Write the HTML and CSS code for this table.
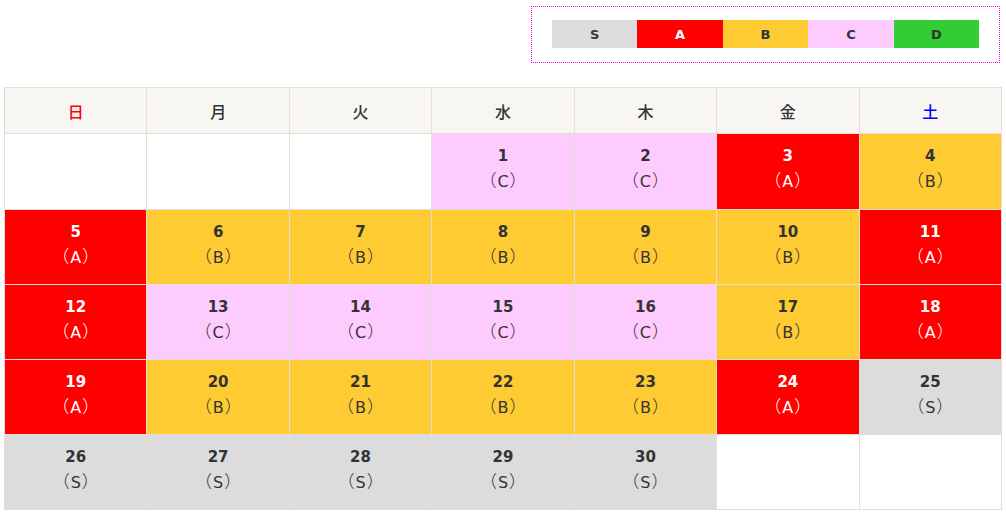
FILE: index.html
```html
<!DOCTYPE html>
<html lang="ja">
<head>
<meta charset="utf-8">
<link rel="stylesheet" href="styles.css">
</head>
<body>
<div class="page">
  <div class="legend-row">
    <div class="legend">
      <span class="lg s">S</span>
      <span class="lg a">A</span>
      <span class="lg b">B</span>
      <span class="lg c">C</span>
      <span class="lg d">D</span>
    </div>
  </div>
  <table class="cal">
    <thead>
      <tr>
        <th class="sun">日</th><th>月</th><th>火</th><th>水</th><th>木</th><th>金</th><th class="sat">土</th>
      </tr>
    </thead>
    <tbody>
      <tr class="first">
        <td></td><td></td><td></td>
        <td class="c"><div class="n">1</div><div class="r"><span class="p">（</span>C<span class="p">）</span></div></td>
        <td class="c"><div class="n">2</div><div class="r"><span class="p">（</span>C<span class="p">）</span></div></td>
        <td class="a"><div class="n">3</div><div class="r"><span class="p">（</span>A<span class="p">）</span></div></td>
        <td class="b"><div class="n">4</div><div class="r"><span class="p">（</span>B<span class="p">）</span></div></td>
      </tr>
      <tr>
        <td class="a"><div class="n">5</div><div class="r"><span class="p">（</span>A<span class="p">）</span></div></td>
        <td class="b"><div class="n">6</div><div class="r"><span class="p">（</span>B<span class="p">）</span></div></td>
        <td class="b"><div class="n">7</div><div class="r"><span class="p">（</span>B<span class="p">）</span></div></td>
        <td class="b"><div class="n">8</div><div class="r"><span class="p">（</span>B<span class="p">）</span></div></td>
        <td class="b"><div class="n">9</div><div class="r"><span class="p">（</span>B<span class="p">）</span></div></td>
        <td class="b"><div class="n">10</div><div class="r"><span class="p">（</span>B<span class="p">）</span></div></td>
        <td class="a"><div class="n">11</div><div class="r"><span class="p">（</span>A<span class="p">）</span></div></td>
      </tr>
      <tr>
        <td class="a"><div class="n">12</div><div class="r"><span class="p">（</span>A<span class="p">）</span></div></td>
        <td class="c"><div class="n">13</div><div class="r"><span class="p">（</span>C<span class="p">）</span></div></td>
        <td class="c"><div class="n">14</div><div class="r"><span class="p">（</span>C<span class="p">）</span></div></td>
        <td class="c"><div class="n">15</div><div class="r"><span class="p">（</span>C<span class="p">）</span></div></td>
        <td class="c"><div class="n">16</div><div class="r"><span class="p">（</span>C<span class="p">）</span></div></td>
        <td class="b"><div class="n">17</div><div class="r"><span class="p">（</span>B<span class="p">）</span></div></td>
        <td class="a"><div class="n">18</div><div class="r"><span class="p">（</span>A<span class="p">）</span></div></td>
      </tr>
      <tr>
        <td class="a"><div class="n">19</div><div class="r"><span class="p">（</span>A<span class="p">）</span></div></td>
        <td class="b"><div class="n">20</div><div class="r"><span class="p">（</span>B<span class="p">）</span></div></td>
        <td class="b"><div class="n">21</div><div class="r"><span class="p">（</span>B<span class="p">）</span></div></td>
        <td class="b"><div class="n">22</div><div class="r"><span class="p">（</span>B<span class="p">）</span></div></td>
        <td class="b"><div class="n">23</div><div class="r"><span class="p">（</span>B<span class="p">）</span></div></td>
        <td class="a"><div class="n">24</div><div class="r"><span class="p">（</span>A<span class="p">）</span></div></td>
        <td class="s"><div class="n">25</div><div class="r"><span class="p">（</span>S<span class="p">）</span></div></td>
      </tr>
      <tr>
        <td class="s"><div class="n">26</div><div class="r"><span class="p">（</span>S<span class="p">）</span></div></td>
        <td class="s"><div class="n">27</div><div class="r"><span class="p">（</span>S<span class="p">）</span></div></td>
        <td class="s"><div class="n">28</div><div class="r"><span class="p">（</span>S<span class="p">）</span></div></td>
        <td class="s"><div class="n">29</div><div class="r"><span class="p">（</span>S<span class="p">）</span></div></td>
        <td class="s"><div class="n">30</div><div class="r"><span class="p">（</span>S<span class="p">）</span></div></td>
        <td></td><td></td>
      </tr>
    </tbody>
  </table>
</div>
</body>
</html>
```
FILE: styles.css
```css
html, body {
  margin: 0;
  padding: 0;
  background: #fff;
}
body {
  font-family: "DejaVu Sans", "Noto Sans CJK JP", sans-serif;
  color: #333;
}
.page {
  padding: 6px 4px 0 4px;
}
.legend-row {
  display: flex;
  justify-content: flex-end;
  padding-right: 2px;
}
.legend {
  width: 427px;
  border: 1px dotted #ff00ff;
  padding: 13px 20px 14px 20px;
  display: flex;
}
.lg {
  flex: 1;
  height: 28px;
  display: flex;
  align-items: center;
  justify-content: center;
  font-weight: bold;
  font-size: 13px;
  color: #333;
}
.s { background: #dcdcdc; }
.a { background: #ff0000; color: #fff; }
.b { background: #fecb33; }
.c { background: #fecbfe; }
.d { background: #33cc33; }
.lg.a { color: #fff; }

.cal {
  margin-top: 24px;
  width: 998px;
  border-collapse: collapse;
  table-layout: fixed;
}
.cal th, .cal td {
  border: 1px solid #e6ddd4;
  text-align: center;
  padding: 0;
}
.cal th {
  background: #f8f6f2;
  height: 45px;
  font-family: "Noto Sans CJK JP", sans-serif;
  font-weight: 500;
  font-size: 16px;
  color: #333;
}
.cal th.sun { color: #ff0000; }
.cal th.sat { color: #0000ff; }
.cal td {
  height: 74px;
  vertical-align: top;
}
.cal tr.first td {
  height: 75px;
}
.n {
  margin-top: 12px;
  font-weight: bold;
  font-size: 15px;
  line-height: 20px;
}
.r {
  margin-top: 3px;
  font-size: 16px;
  line-height: 22px;
  font-family: "DejaVu Sans", sans-serif;
  font-weight: normal;
}
.p {
  font-family: "Noto Sans CJK JP", sans-serif;
  font-weight: 300;
  font-size: 17px;
}
.p:first-child { padding-right: 1px; }
.p:last-child { padding-left: 1px; }
td.a .n, td.a .r { color: #fff; }
```
